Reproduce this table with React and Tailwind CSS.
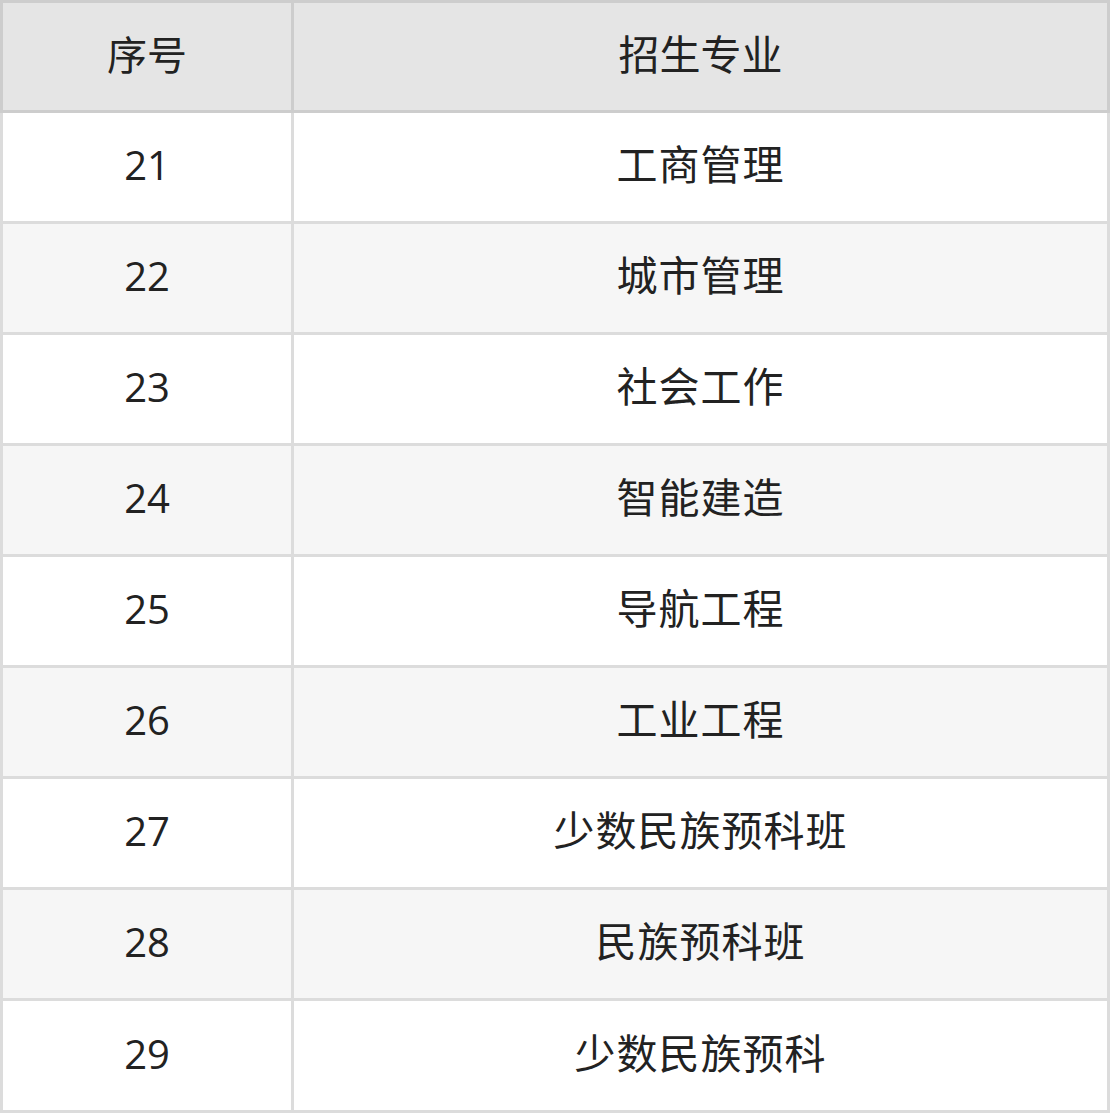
const rows = [
  { no: 21, name: "工商管理" },
  { no: 22, name: "城市管理" },
  { no: 23, name: "社会工作" },
  { no: 24, name: "智能建造" },
  { no: 25, name: "导航工程" },
  { no: 26, name: "工业工程" },
  { no: 27, name: "少数民族预科班" },
  { no: 28, name: "民族预科班" },
  { no: 29, name: "少数民族预科" },
];

const App = () => {
  return (
    <div
      className="w-[1110px] bg-white text-[40px] text-[#222]"
      style={{ fontFamily: '"Open Sans", "Noto Sans CJK SC", sans-serif' }}
    >
      <div className="flex h-[113px] border-[3px] border-[#cdcdcd] bg-[#e5e5e5]">
        <div className="w-[291px] pb-[4px] border-r-[3px] border-[#cdcdcd] flex items-center justify-center">
          序号
        </div>
        <div className="flex-1 pb-[4px] flex items-center justify-center text-[41px]">
          招生专业
        </div>
      </div>
      {rows.map((r, i) => (
        <div
          key={r.no}
          className={`flex border-x-[3px] border-b-[3px] border-[#dcdcdc] ${
            i === rows.length - 1 ? "h-[112px]" : "h-[111px]"
          } ${i % 2 === 1 ? "bg-[#f6f6f6]" : "bg-white"}`}
        >
          <div className="w-[291px] pb-[4px] border-r-[3px] border-[#dcdcdc] flex items-center justify-center">
            {r.no}
          </div>
          <div className="flex-1 pb-[4px] flex items-center justify-center text-[41px] tracking-[1px]">
            {r.name}
          </div>
        </div>
      ))}
    </div>
  );
};

export default App;
